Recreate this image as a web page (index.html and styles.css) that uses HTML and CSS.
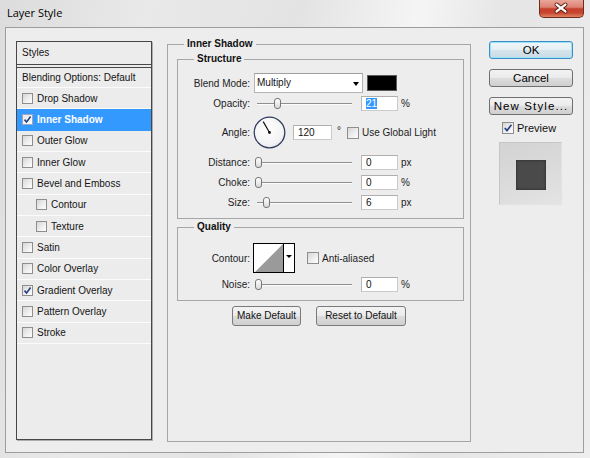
FILE: index.html
```html
<!DOCTYPE html>
<html>
<head>
<meta charset="utf-8">
<title>Layer Style</title>
<link rel="stylesheet" href="styles.css">
</head>
<body>
<div class="window">
  <div class="titlebar">
    <span class="title">Layer Style</span>
    <div class="close">
      <svg width="45" height="17" viewBox="0 0 45 17">
        <path d="M18 4.5 L27 11.5 M27 4.5 L18 11.5" stroke="#5a1a12" stroke-width="4.2" stroke-linecap="round" fill="none"/>
        <path d="M18 4.5 L27 11.5 M27 4.5 L18 11.5" stroke="#ffffff" stroke-width="2.4" stroke-linecap="round" fill="none"/>
      </svg>
    </div>
  </div>
  <div class="frame">
    <div class="styles">
      <div class="list-head">Styles</div>
      <div class="list-blend">Blending Options: Default</div>
      <div class="item"><span class="cb"></span>Drop Shadow</div>
      <div class="item sel"><span class="cb"><svg width="9" height="9" viewBox="0 0 9 9"><path d="M1.5 4.6 L3.6 7 L7.6 1.6" stroke="#2b3f86" stroke-width="1.6" fill="none"/></svg></span>Inner Shadow</div>
      <div class="item"><span class="cb"></span>Outer Glow</div>
      <div class="item"><span class="cb"></span>Inner Glow</div>
      <div class="item"><span class="cb"></span>Bevel and Emboss</div>
      <div class="item sub"><span class="cb"></span>Contour</div>
      <div class="item sub"><span class="cb"></span>Texture</div>
      <div class="item"><span class="cb"></span>Satin</div>
      <div class="item"><span class="cb"></span>Color Overlay</div>
      <div class="item"><span class="cb"><svg width="9" height="9" viewBox="0 0 9 9"><path d="M1.5 4.6 L3.6 7 L7.6 1.6" stroke="#2b3f86" stroke-width="1.6" fill="none"/></svg></span>Gradient Overlay</div>
      <div class="item"><span class="cb"></span>Pattern Overlay</div>
      <div class="item"><span class="cb"></span>Stroke</div>
    </div>

    <div class="main">
      <fieldset class="group outer">
        <legend>Inner Shadow</legend>
        <div class="outer-body">
          <fieldset class="group structure">
            <legend>Structure</legend>
            <div class="rows">
              <div class="row r-blend">
                <span class="lbl">Blend Mode:</span>
                <div class="select">Multiply<span class="arrow"></span></div>
                <span class="swatch"></span>
              </div>
              <div class="row r-op">
                <span class="lbl">Opacity:</span>
                <div class="slider"><span class="track"></span><span class="thumb" style="left:19px"></span></div>
                <div class="num"><span class="hl">21</span></div>
                <span class="unit">%</span>
              </div>
              <div class="row r-angle">
                <span class="lbl">Angle:</span>
                <svg class="dial" width="33" height="33" viewBox="0 0 33 33">
                  <defs>
                    <radialGradient id="dg" cx="0.45" cy="0.4" r="0.7">
                      <stop offset="0" stop-color="#ffffff"/>
                      <stop offset="0.7" stop-color="#f3f3f5"/>
                      <stop offset="1" stop-color="#dcdce4"/>
                    </radialGradient>
                  </defs>
                  <circle cx="16.5" cy="16.5" r="15.3" fill="url(#dg)" stroke="#2f3b5c" stroke-width="1.3"/>
                  <path d="M16.5 16.5 L10.2 5.6" stroke="#111" stroke-width="1.2"/>
                  <circle cx="16.5" cy="16.5" r="1.4" fill="#111"/>
                </svg>
                <div class="num num-angle">120</div>
                <span class="deg">°</span>
                <span class="cb lg gl"></span>
                <span class="cbtext">Use Global Light</span>
              </div>
              <div class="row r-sl r-dist">
                <span class="lbl">Distance:</span>
                <div class="slider"><span class="track"></span><span class="thumb" style="left:0px"></span></div>
                <div class="num">0</div>
                <span class="unit">px</span>
              </div>
              <div class="row r-sl">
                <span class="lbl">Choke:</span>
                <div class="slider"><span class="track"></span><span class="thumb" style="left:0px"></span></div>
                <div class="num">0</div>
                <span class="unit">%</span>
              </div>
              <div class="row r-sl">
                <span class="lbl">Size:</span>
                <div class="slider"><span class="track"></span><span class="thumb" style="left:8px"></span></div>
                <div class="num">6</div>
                <span class="unit">px</span>
              </div>
            </div>
          </fieldset>

          <fieldset class="group quality">
            <legend>Quality</legend>
            <div class="rows q-rows">
              <div class="row r-contour">
                <span class="lbl">Contour:</span>
                <div class="contour">
                  <svg class="curve" width="29" height="28" viewBox="0 0 29 28">
                    <rect width="29" height="28" fill="#fff"/>
                    <polygon points="1,28 29,0 29,28" fill="#9a9a9a"/>
                  </svg>
                  <span class="c-drop"><span class="arrow small"></span></span>
                </div>
                <span class="cb lg aa"></span>
                <span class="cbtext">Anti-aliased</span>
              </div>
              <div class="row r-noise">
                <span class="lbl">Noise:</span>
                <div class="slider"><span class="track"></span><span class="thumb" style="left:0px"></span></div>
                <div class="num">0</div>
                <span class="unit">%</span>
              </div>
            </div>
          </fieldset>

          <div class="btnrow">
            <button class="pbtn b-make">Make Default</button>
            <button class="pbtn b-reset">Reset to Default</button>
          </div>
        </div>
      </fieldset>
    </div>

    <div class="side">
      <button class="btn ok">OK</button>
      <button class="btn">Cancel</button>
      <button class="btn newstyle">New Style...</button>
      <div class="preview-row">
        <span class="cb lg"><svg width="10" height="10" viewBox="0 0 10 10"><path d="M1.8 5 L4 7.6 L8.4 1.8" stroke="#2b3f86" stroke-width="1.7" fill="none"/></svg></span>
        <span class="pv-text">Preview</span>
      </div>
      <div class="thumbbox"><span class="sq"></span></div>
    </div>
  </div>
</div>
</body>
</html>
```
FILE: styles.css
```css
html, body {
  margin: 0;
  padding: 0;
}
body {
  width: 590px;
  height: 458px;
  overflow: hidden;
  background: linear-gradient(100deg, #dcdcdc 0%, #e9e9e9 22%, #e3e3e3 45%, #f5f5f5 63%, #e5e5e5 76%, #eeeeee 100%);
  font-family: Tahoma, "Liberation Sans", Arial, sans-serif;
  font-size: 10px;
  color: #141414;
}
.window {
  display: flex;
  flex-direction: column;
  height: 458px;
}
.titlebar {
  height: 27px;
  flex: none;
  display: flex;
  align-items: flex-start;
}
.title {
  font-family: "Open Sans", "Liberation Sans", sans-serif;
  font-size: 11px;
  line-height: 14px;
  padding: 6px 0 0 7px;
  color: #000;
}
.close {
  margin-left: auto;
  margin-right: 6px;
  width: 45px;
  height: 18px;
  box-sizing: border-box;
  border: 1px solid #6e2b22;
  border-top: none;
  border-radius: 0 0 5px 5px;
  background: linear-gradient(#e9a699 0%, #db8372 42%, #c6402d 52%, #c8462f 75%, #df8460 100%);
  display: flex;
  align-items: center;
  justify-content: center;
}
.close svg {
  display: block;
  margin-left: -1px;
}

.frame {
  margin: 0 6px 0 5px;
  height: 426px;
  box-sizing: border-box;
  border: 1px solid #9d9d9d;
  background: #ededed;
  display: flex;
  align-items: flex-start;
  padding-left: 10px;
}

/* styles list */
.styles {
  width: 136px;
  height: 399px;
  margin-top: 13px;
  box-sizing: border-box;
  border: 1px solid #474747;
  box-shadow: 1px 1px 0 #adadad;
  background: #ececec;
  flex: none;
}
.list-head {
  height: 23px;
  box-sizing: border-box;
  border-bottom: 1px solid #474747;
  padding-left: 5px;
  line-height: 21px;
}
.list-blend {
  margin-top: 2px;
  height: 21px;
  box-sizing: border-box;
  border-top: 1px solid #474747;
  border-bottom: 1px solid #fbfbfb;
  padding-left: 5px;
  line-height: 19px;
}
.item {
  height: 21.33px;
  box-sizing: border-box;
  border-bottom: 1px solid #fbfbfb;
  display: flex;
  align-items: center;
  padding-left: 5px;
}
.item.sub {
  padding-left: 19px;
}
.item.sel {
  background: #3399ff;
  border-bottom-color: #3399ff;
  color: #fff;
  font-weight: bold;
}
.cb {
  width: 11px;
  height: 11px;
  box-sizing: border-box;
  border: 1px solid #8e8e8e;
  background: linear-gradient(135deg, #d6d6d6 0%, #f0f0f0 60%, #fdfdfd 100%);
  flex: none;
  margin-right: 4px;
  display: flex;
  align-items: center;
  justify-content: center;
}
.item.sel .cb {
  border-color: #9aa7c0;
  background: linear-gradient(135deg, #e6e6e6, #ffffff);
}
.cb svg {
  display: block;
}
.cb.lg {
  width: 12px;
  height: 12px;
  margin-right: 0;
}

/* main panel */
.main {
  margin-left: 15px;
  margin-top: 10px;
  width: 304px;
  flex: none;
}
.group {
  border: 1px solid #a6a6a6;
  margin: 0;
  padding: 0;
  min-width: 0;
  box-sizing: border-box;
}
.group legend {
  margin-left: 16px;
  padding: 0 3px;
  font-weight: bold;
  font-size: 10px;
  line-height: 12px;
  color: #111;
}
.outer {
  height: 404px;
}
.outer-body {
  padding: 3px 6px 0 9px;
}
.rows {
  padding: 8px 0 8px;
}
.q-rows {
  padding: 10px 0 8px;
}
.quality {
  margin-top: 2px;
}
.row {
  display: flex;
  align-items: center;
}
.lbl {
  width: 72px;
  margin-right: 4px;
  text-align: right;
  flex: none;
  color: #1c1c1c;
}
.r-blend { height: 20px; }
.r-op { height: 15px; margin-top: 3px; }
.r-angle { height: 33px; margin-top: 5px; }
.r-sl { height: 15px; margin-top: 5px; }
.r-dist { margin-top: 6px; }
.r-contour { height: 30px; }
.r-noise { height: 15px; margin-top: 4px; }

.select {
  width: 109px;
  height: 20px;
  box-sizing: border-box;
  border: 1px solid #b3b3b3;
  border-top-color: #9f9f9f;
  background: #fff;
  padding-left: 2px;
  line-height: 18px;
  position: relative;
  flex: none;
}
.arrow {
  position: absolute;
  right: 3px;
  top: 8px;
  width: 0;
  height: 0;
  border-left: 3.5px solid transparent;
  border-right: 3.5px solid transparent;
  border-top: 4px solid #000;
}
.swatch {
  width: 30px;
  height: 16px;
  box-sizing: border-box;
  margin-left: 4px;
  background: #000;
  border: 1px solid #5a5a5a;
  flex: none;
}
.slider {
  position: relative;
  width: 98px;
  height: 12px;
  margin-left: 1px;
  flex: none;
}
.track {
  position: absolute;
  left: 2px;
  right: 1px;
  top: 5px;
  height: 1px;
  background: #8f8f8f;
  box-shadow: 0 1px 0 #fdfdfd;
}
.thumb {
  position: absolute;
  top: 0;
  width: 7px;
  height: 11px;
  box-sizing: border-box;
  border: 1px solid #777;
  border-radius: 3px;
  background: linear-gradient(#ffffff, #d9d9d9);
}
.num {
  width: 37px;
  height: 15px;
  box-sizing: border-box;
  margin-left: 8px;
  background: #fff;
  border: 1px solid #cacaca;
  border-top-color: #aeaeae;
  border-left-color: #b8b8b8;
  padding-left: 4px;
  line-height: 13px;
  flex: none;
  color: #111;
}
.hl {
  background: #3399ff;
  color: #fff;
  display: inline-block;
  line-height: 11px;
}
.unit {
  margin-left: 3px;
  color: #222;
}
.dial {
  display: block;
  margin-left: -1px;
  flex: none;
}
.num-angle {
  width: 39px;
  margin-left: 7px;
}
.deg {
  margin-left: 5px;
  margin-top: -5px;
}
.gl {
  margin-left: 6px;
}
.aa {
  margin-left: 12px;
}
.cbtext {
  margin-left: 3px;
  color: #1c1c1c;
}

.contour {
  width: 42px;
  height: 30px;
  box-sizing: border-box;
  margin-left: -1px;
  border: 1px solid #000;
  background: #fff;
  display: flex;
  flex: none;
}
.curve {
  display: block;
  flex: none;
}
.c-drop {
  flex: 1;
  border-left: 1px solid #000;
  position: relative;
}
.arrow.small {
  right: 2px;
  top: 11px;
  border-left-width: 3px;
  border-right-width: 3px;
  border-top-width: 3.5px;
}

.btnrow {
  margin-top: 5px;
  display: flex;
  justify-content: center;
  gap: 15px;
  padding-right: 3px;
}
.pbtn {
  height: 20px;
  box-sizing: border-box;
  padding: 0;
  border: 1px solid #7a7a7a;
  border-radius: 3px;
  background: linear-gradient(#f3f3f3 0%, #ebebeb 48%, #dcdcdc 52%, #d0d0d0 100%);
  font-family: Tahoma, "Liberation Sans", Arial, sans-serif;
  font-size: 10px;
  color: #111;
  line-height: 18px;
}
.b-make { width: 69px; }
.b-reset { width: 90px; }

/* side column */
.side {
  margin-left: 18px;
  margin-top: 13px;
  width: 84px;
  flex: none;
  display: flex;
  flex-direction: column;
}
.btn {
  height: 18px;
  box-sizing: border-box;
  padding: 0;
  border: 1px solid #707070;
  border-radius: 3px;
  background: linear-gradient(#f2f2f2 0%, #ebebeb 48%, #dddddd 52%, #cfcfcf 100%);
  font-family: Tahoma, "Liberation Sans", Arial, sans-serif;
  font-size: 11.5px;
  line-height: 16px;
  color: #000;
  text-align: center;
}
.btn + .btn {
  margin-top: 10px;
}
.ok {
  border-color: #3a8fc4;
  box-shadow: inset 0 0 0 1px #9de0fa;
  background: linear-gradient(#f0f6f9 0%, #e6eff4 48%, #d6e4ec 52%, #c9dbe5 100%);
}
.newstyle {
  letter-spacing: 1.1px;
}
.preview-row {
  margin-top: 7px;
  height: 12px;
  display: flex;
  align-items: center;
  padding-left: 13px;
}
.pv-text {
  margin-left: 3px;
  font-size: 11px;
  color: #111;
}
.thumbbox {
  margin-top: 8px;
  margin-left: 10px;
  width: 63px;
  height: 63px;
  box-sizing: border-box;
  border: 1px solid #c6c6c6;
  border-bottom-color: #e2e2e2;
  border-right-color: #e2e2e2;
  background: linear-gradient(160deg, #d3d3d3 0%, #dadada 50%, #e4e4e4 100%);
  display: flex;
  align-items: center;
  justify-content: center;
}
.sq {
  width: 30px;
  height: 30px;
  background: #4a4a4a;
  box-shadow: inset 0 0 3px #262626;
  margin-left: 1px;
  margin-top: 2px;
}
```
